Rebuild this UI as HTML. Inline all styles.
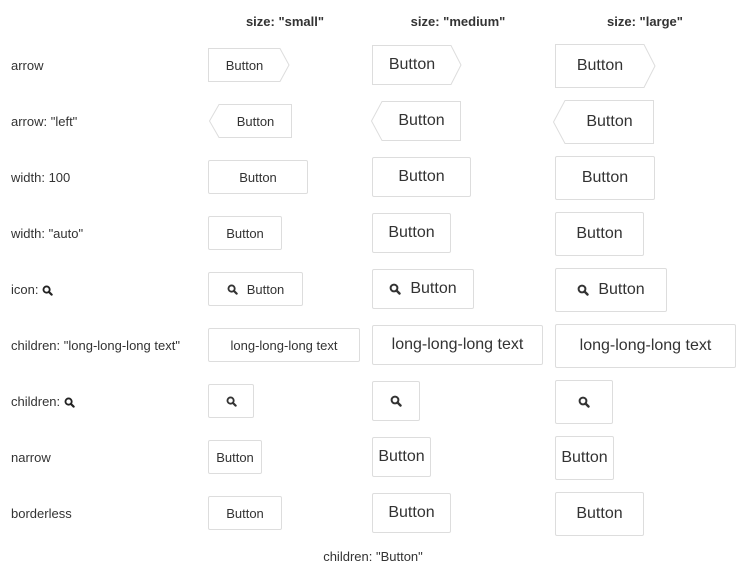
<!DOCTYPE html><html><head><meta charset="utf-8"><style>
body{margin:0;width:746px;height:566px;background:#fff;font-family:"Liberation Sans",sans-serif;color:#333;position:relative;overflow:hidden}
.a{position:absolute}
.l{position:absolute;left:11px;font-size:13px;line-height:16px}
.h{position:absolute;top:14px;font-size:13px;font-weight:bold;width:160px;text-align:center}
.b{position:absolute;box-sizing:border-box;border:1px solid #ddd;border-radius:2px;display:flex;align-items:center;justify-content:center;white-space:nowrap;color:#333}
.s{height:34px;font-size:13px}.m{height:40px;font-size:16px}.g{height:44px;font-size:16px}
.t{position:absolute;display:flex;align-items:center;justify-content:center;white-space:nowrap}
svg.i{display:inline-block;vertical-align:middle}
</style></head><body>
<div class="h" style="left:205px">size: "small"</div>
<div class="h" style="left:378px">size: "medium"</div>
<div class="h" style="left:565px">size: "large"</div>

<div class="l" style="top:58px">arrow</div>
<div class="l" style="top:114px">arrow: "left"</div>
<div class="l" style="top:170px">width: 100</div>
<div class="l" style="top:226px">width: "auto"</div>
<div class="l" style="top:282px">icon: <svg class="i" width="11" height="11" viewBox="0 0 12 12"><circle cx="5" cy="5" r="3.4" fill="none" stroke="#222" stroke-width="2"/><path d="M7.5 7.5L10.5 10.5" stroke="#222" stroke-width="2.4" stroke-linecap="round"/></svg></div>
<div class="l" style="top:338px">children: "long-long-long text"</div>
<div class="l" style="top:394px">children: <svg class="i" width="11" height="11" viewBox="0 0 12 12"><circle cx="5" cy="5" r="3.4" fill="none" stroke="#222" stroke-width="2"/><path d="M7.5 7.5L10.5 10.5" stroke="#222" stroke-width="2.4" stroke-linecap="round"/></svg></div>
<div class="l" style="top:450px">narrow</div>
<div class="l" style="top:506px">borderless</div>

<!-- arrow right -->
<svg class="a" style="left:208px;top:48px" width="82" height="34"><polygon points="0.5,0.5 72,0.5 81,17 72,33.5 0.5,33.5" fill="#fff" stroke="#ddd"/></svg>
<div class="t" style="left:208px;top:48px;width:73px;height:34px;font-size:13px">Button</div>
<svg class="a" style="left:372px;top:45px" width="90" height="40"><polygon points="0.5,0.5 79,0.5 89,20 79,39.5 0.5,39.5" fill="#fff" stroke="#ddd"/></svg>
<div class="t" style="left:372px;top:45px;width:80px;height:40px;font-size:16px">Button</div>
<svg class="a" style="left:555px;top:44px" width="101" height="44"><polygon points="0.5,0.5 89,0.5 100,22 89,43.5 0.5,43.5" fill="#fff" stroke="#ddd"/></svg>
<div class="t" style="left:555px;top:44px;width:90px;height:44px;font-size:16px">Button</div>

<!-- arrow left -->
<svg class="a" style="left:209px;top:104px" width="83" height="34"><polygon points="82.5,0.5 10,0.5 0.5,17 10,33.5 82.5,33.5" fill="#fff" stroke="#ddd"/></svg>
<div class="t" style="left:219px;top:104px;width:73px;height:34px;font-size:13px">Button</div>
<svg class="a" style="left:371px;top:101px" width="90" height="40"><polygon points="89.5,0.5 11,0.5 0.5,20 11,39.5 89.5,39.5" fill="#fff" stroke="#ddd"/></svg>
<div class="t" style="left:382px;top:101px;width:79px;height:40px;font-size:16px">Button</div>
<svg class="a" style="left:553px;top:100px" width="101" height="44"><polygon points="100.5,0.5 12,0.5 0.5,22 12,43.5 100.5,43.5" fill="#fff" stroke="#ddd"/></svg>
<div class="t" style="left:565px;top:100px;width:89px;height:44px;font-size:16px">Button</div>

<!-- width 100 -->
<div class="b s" style="left:208px;top:160px;width:100px">Button</div>
<div class="b m" style="left:372px;top:157px;width:99px">Button</div>
<div class="b g" style="left:555px;top:156px;width:100px">Button</div>

<!-- auto -->
<div class="b s" style="left:208px;top:216px;width:74px">Button</div>
<div class="b m" style="left:372px;top:213px;width:79px">Button</div>
<div class="b g" style="left:555px;top:212px;width:89px">Button</div>

<!-- icon -->
<div class="b s" style="left:208px;top:272px;width:95px"><svg class="i" width="11" height="11" viewBox="0 0 12 12" style="margin-right:9px"><circle cx="5" cy="5" r="3.4" fill="none" stroke="#333" stroke-width="2"/><path d="M7.5 7.5L10.5 10.5" stroke="#333" stroke-width="2.4" stroke-linecap="round"/></svg>Button</div>
<div class="b m" style="left:372px;top:269px;width:102px"><svg class="i" width="12" height="12" viewBox="0 0 12 12" style="margin-right:9px"><circle cx="5" cy="5" r="3.4" fill="none" stroke="#333" stroke-width="2"/><path d="M7.5 7.5L10.5 10.5" stroke="#333" stroke-width="2.4" stroke-linecap="round"/></svg>Button</div>
<div class="b g" style="left:555px;top:268px;width:112px"><svg class="i" width="12" height="12" viewBox="0 0 12 12" style="margin-right:9px"><circle cx="5" cy="5" r="3.4" fill="none" stroke="#333" stroke-width="2"/><path d="M7.5 7.5L10.5 10.5" stroke="#333" stroke-width="2.4" stroke-linecap="round"/></svg>Button</div>

<!-- long -->
<div class="b s" style="left:208px;top:328px;width:152px">long-long-long text</div>
<div class="b m" style="left:372px;top:325px;width:171px">long-long-long text</div>
<div class="b g" style="left:555px;top:324px;width:181px">long-long-long text</div>

<!-- children icon -->
<div class="b s" style="left:208px;top:384px;width:46px"><svg class="i" width="11" height="11" viewBox="0 0 12 12"><circle cx="5" cy="5" r="3.4" fill="none" stroke="#333" stroke-width="2"/><path d="M7.5 7.5L10.5 10.5" stroke="#333" stroke-width="2.4" stroke-linecap="round"/></svg></div>
<div class="b m" style="left:372px;top:381px;width:48px"><svg class="i" width="12" height="12" viewBox="0 0 12 12"><circle cx="5" cy="5" r="3.4" fill="none" stroke="#333" stroke-width="2"/><path d="M7.5 7.5L10.5 10.5" stroke="#333" stroke-width="2.4" stroke-linecap="round"/></svg></div>
<div class="b g" style="left:555px;top:380px;width:58px"><svg class="i" width="12" height="12" viewBox="0 0 12 12"><circle cx="5" cy="5" r="3.4" fill="none" stroke="#333" stroke-width="2"/><path d="M7.5 7.5L10.5 10.5" stroke="#333" stroke-width="2.4" stroke-linecap="round"/></svg></div>

<!-- narrow -->
<div class="b s" style="left:208px;top:440px;width:54px">Button</div>
<div class="b m" style="left:372px;top:437px;width:59px">Button</div>
<div class="b g" style="left:555px;top:436px;width:59px">Button</div>

<!-- borderless -->
<div class="b s" style="left:208px;top:496px;width:74px">Button</div>
<div class="b m" style="left:372px;top:493px;width:79px">Button</div>
<div class="b g" style="left:555px;top:492px;width:89px">Button</div>

<div class="a" style="left:273px;top:549px;width:200px;text-align:center;font-size:13px">children: "Button"</div>
</body></html>
